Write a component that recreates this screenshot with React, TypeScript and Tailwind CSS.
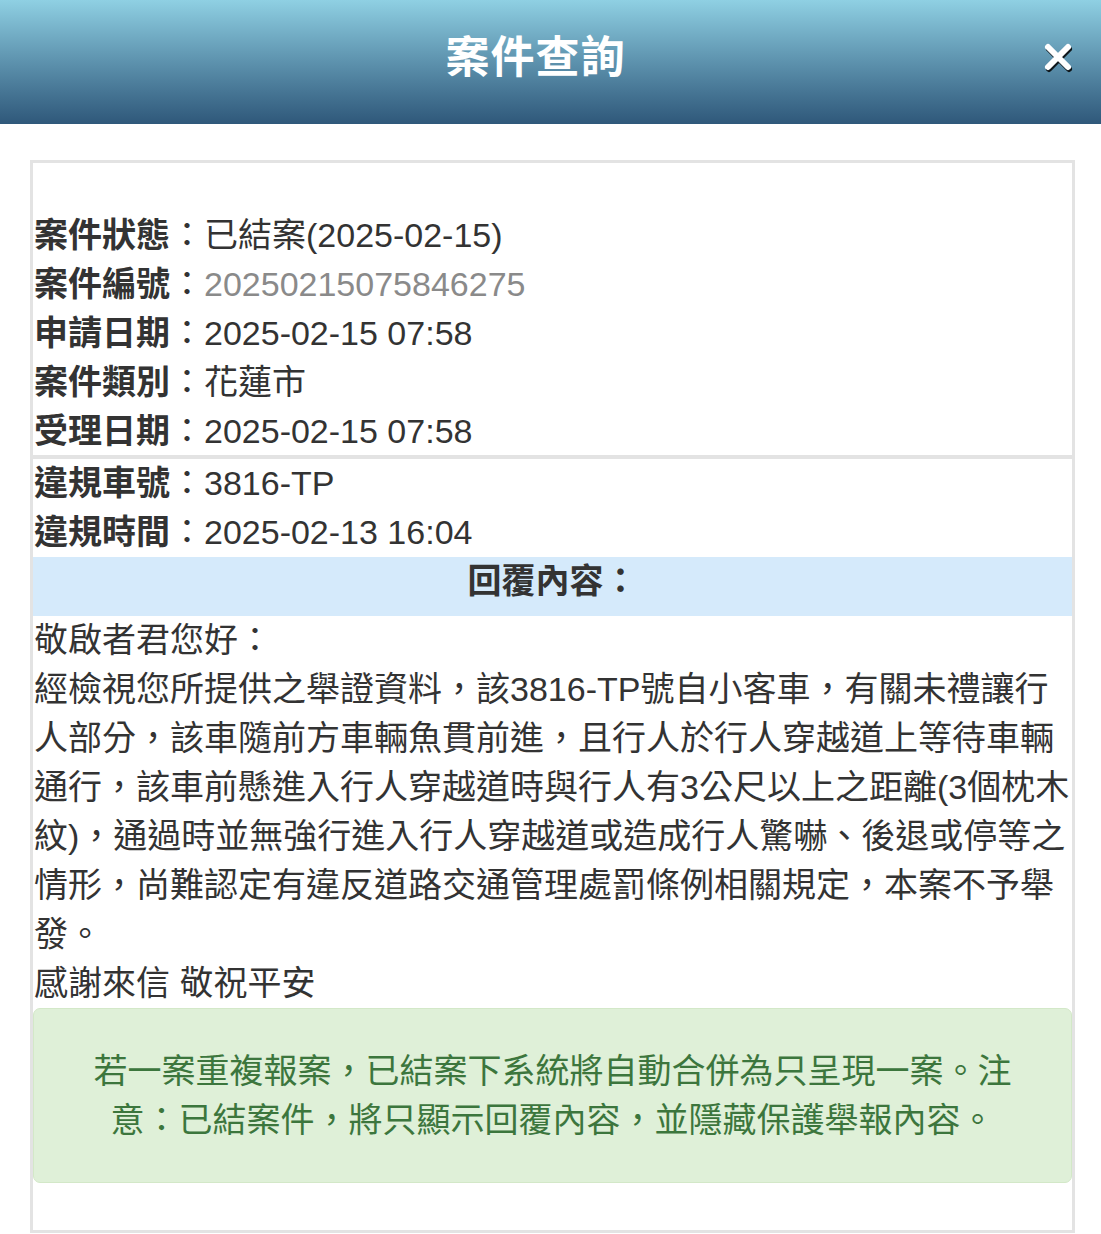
import React from 'react';

const font = { fontFamily: '"Liberation Sans", "Noto Sans CJK TC", sans-serif' };

interface RowProps {
  label: string;
  value: string;
  muted?: boolean;
}

function Row({ label, value, muted }: RowProps) {
  return (
    <div className="leading-[49px] whitespace-nowrap">
      <span className="font-bold text-[#333]">{label}</span>
      <span className="text-[#333]">：</span>
      <span className={muted ? 'text-[#8a8a8a]' : 'text-[#333]'}>{value}</span>
    </div>
  );
}

export default function App() {
  return (
    <div className="w-[1101px] min-h-[1234px] bg-white" style={font}>
      <header className="h-[124px] bg-gradient-to-b from-[#8fd0e3] to-[#2f587a] flex items-center justify-center relative">
        <h1 className="text-[44px] font-bold text-white tracking-[1px] pr-[30px] -mt-[8px]">案件查詢</h1>
        <button className="absolute right-[28px] top-[42px] w-[30px] h-[30px]">
          <svg viewBox="0 0 30 30" className="w-[30px] h-[30px] drop-shadow-[1px_2px_0_rgba(0,0,0,0.85)]">
            <path d="M5 5 L25 25 M25 5 L5 25" stroke="#fff" strokeWidth="6" strokeLinecap="round" />
          </svg>
        </button>
      </header>

      <div className="ml-[30px] w-[1045px] mt-[36px] border-[3px] border-[#e3e3e3] text-[34px] pt-[48px] pb-[47px]">
        <div className="px-[1px]">
          <Row label="案件狀態" value="已結案(2025-02-15)" />
          <Row label="案件編號" value="20250215075846275" muted />
          <Row label="申請日期" value="2025-02-15 07:58" />
          <Row label="案件類別" value="花蓮市" />
          <Row label="受理日期" value="2025-02-15 07:58" />
        </div>
        <div className="h-[4px] bg-[#e3e3e3] -mt-[1px]" />
        <div className="px-[1px]">
          <Row label="違規車號" value="3816-TP" />
          <Row label="違規時間" value="2025-02-13 16:04" />
        </div>
        <div className="h-[59px] bg-[#d5eafb] flex items-center justify-center font-bold text-[#333] pb-[10px]">
          回覆內容：
        </div>
        <div className="px-[1px] text-[#333] leading-[49px]">
          <p>敬啟者君您好：</p>
          <p>
            經檢視您所提供之舉證資料，該3816-TP號自小客車，有關未禮讓行人部分，該車隨前方車輛魚貫前進，且行人於行人穿越道上等待車輛通行，該車前懸進入行人穿越道時與行人有3公尺以上之距離(3個枕木紋)，通過時並無強行進入行人穿越道或造成行人驚嚇、後退或停等之情形，尚難認定有違反道路交通管理處罰條例相關規定，本案不予舉發。
          </p>
          <p>感謝來信 敬祝平安</p>
        </div>
        <div className="border border-[#d3e8c8] bg-[#dff0d8] rounded-[7px] text-[#3c763d] text-[34px] text-center leading-[48.5px] px-[40px] py-[38px]">
          若一案重複報案，已結案下系統將自動合併為只呈現一案。注意：已結案件，將只顯示回覆內容，並隱藏保護舉報內容。
        </div>
      </div>
    </div>
  );
}
